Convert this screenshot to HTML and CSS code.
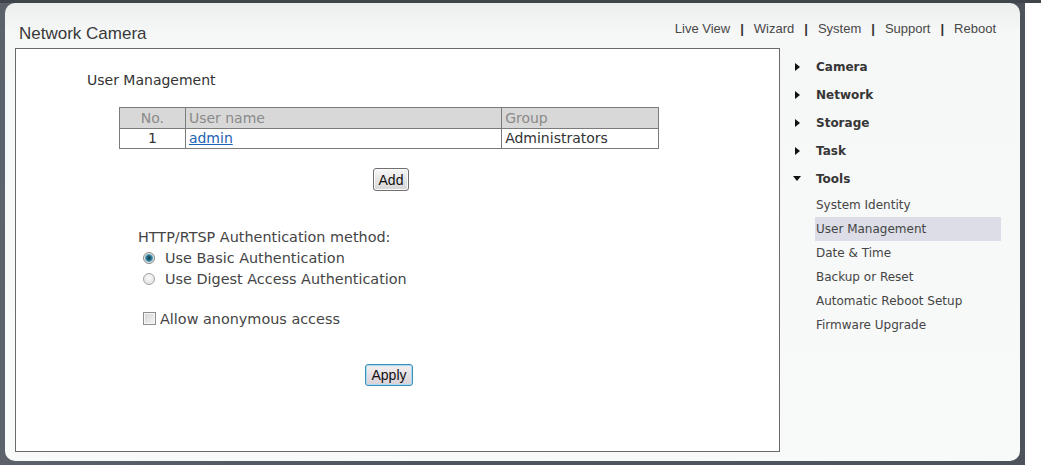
FILE: index.html
```html
<!DOCTYPE html>
<html lang="en">
<head>
<meta charset="utf-8">
<title>Network Camera - User Management</title>
<link rel="stylesheet" href="styles.css">
</head>
<body>
<div class="topline"></div>
<div class="frame">
  <div class="panel">
    <header class="head">
      <div class="brand">Network Camera</div>
      <nav class="topnav">
        <a>Live View</a><span class="sep">|</span><a>Wizard</a><span class="sep">|</span><a>System</a><span class="sep">|</span><a>Support</a><span class="sep">|</span><a>Reboot</a>
      </nav>
    </header>
    <div class="body">
      <main class="main">
        <div class="content">
          <div class="sec-title">User Management</div>
          <table class="users">
            <thead>
              <tr><th class="c-no">No.</th><th class="c-name">User name</th><th class="c-group">Group</th></tr>
            </thead>
            <tbody>
              <tr><td class="c-no">1</td><td class="c-name"><a class="link">admin</a></td><td class="c-group">Administrators</td></tr>
            </tbody>
          </table>
          <button class="btn btn-add">Add</button>
          <div class="auth">
            <div class="auth-title">HTTP/RTSP Authentication method:</div>
            <label class="opt"><input type="radio" name="auth" class="radio" checked><span>Use Basic Authentication</span></label>
            <label class="opt"><input type="radio" name="auth" class="radio"><span>Use Digest Access Authentication</span></label>
            <label class="opt chk-row"><input type="checkbox" class="check"><span>Allow anonymous access</span></label>
          </div>
          <button class="btn btn-apply">Apply</button>
        </div>
      </main>
      <aside class="side">
        <div class="menu-item"><span class="tri tri-right"></span>Camera</div>
        <div class="menu-item"><span class="tri tri-right"></span>Network</div>
        <div class="menu-item"><span class="tri tri-right"></span>Storage</div>
        <div class="menu-item"><span class="tri tri-right"></span>Task</div>
        <div class="menu-item"><span class="tri tri-down"></span>Tools</div>
        <ul class="submenu">
          <li>System Identity</li>
          <li class="active">User Management</li>
          <li>Date &amp; Time</li>
          <li>Backup or Reset</li>
          <li>Automatic Reboot Setup</li>
          <li>Firmware Upgrade</li>
        </ul>
      </aside>
    </div>
  </div>
</div>
</body>
</html>
```
FILE: styles.css
```css
* { box-sizing: border-box; }
html, body { margin: 0; padding: 0; background: #fff; }
body { width: 1041px; height: 465px; overflow: hidden; }

.topline { height: 3px; background: #3f454b; }

.frame {
  width: 1025px;
  height: 462px;
  padding: 0 5px 4px 5px;
  background: linear-gradient(to right, #5c6269, #50565d 40%, #4d535a);
}

.panel {
  height: 458px;
  border-radius: 10px;
  background: linear-gradient(#eceeee, #f6f7f7 30px, #f8f9f9);
  display: flex;
  flex-direction: column;
}

.head {
  height: 45px;
  display: flex;
  justify-content: space-between;
  align-items: flex-start;
  padding: 0 24px 0 14px;
  font-family: "Liberation Sans", Arial, sans-serif;
}
.brand {
  margin-top: 21px;
  font-size: 17px;
  line-height: 20px;
  color: #3a3a3a;
}
.topnav {
  margin-top: 18px;
  font-size: 13px;
  line-height: 15px;
  color: #484848;
  white-space: nowrap;
}
.topnav .sep { margin: 0 10px; font-weight: bold; color: #333; }

.body { flex: 1; display: flex; }

.main {
  margin-left: 10px;
  width: 765px;
  height: 404px;
  border: 1px solid #6a6a6a;
  background: #fff;
  padding: 23px 0 0 103px;
  font-family: "DejaVu Sans", Verdana, sans-serif;
  font-size: 14px;
  color: #333;
}
.content { width: 540px; }
.sec-title { margin-left: -32px; line-height: 17px; }

.users {
  margin-top: 18px;
  width: 540px;
  border-collapse: collapse;
  border: 1px solid #7b7b7b;
  font-size: 14px;
}
.users th, .users td {
  border: 1px solid #7b7b7b;
  padding: 0 3px;
  line-height: 17px;
  text-align: left;
  font-weight: normal;
}
.users th { height: 21px; background: #d8d8d8; color: #8a8a8a; }
.users td { height: 20px; color: #333; }
.users .c-no { width: 66px; text-align: center; }
.users .c-name { width: 317px; }
.users .c-group { width: 157px; }
.link { color: #1d63b3; text-decoration: underline; }

.btn {
  display: block;
  padding: 0;
  font-family: "Liberation Sans", Arial, sans-serif;
  font-size: 14px;
  color: #111;
  border: 1px solid #707070;
  border-radius: 3px;
  background: linear-gradient(#f7f7f7, #e6e6e6 50%, #d6d6d6);
  box-shadow: inset 0 0 0 1px #fbfbfb;
}
.btn-add { margin: 19px 0 0 254px; width: 36px; height: 23px; }
.btn-apply {
  margin: 35px 0 0 246px;
  width: 48px;
  height: 22px;
  border-color: #3b8fb8;
  box-shadow: inset 0 0 0 1px #a7dcf3;
  background: linear-gradient(#f4f0f2, #e6e0e4 50%, #d8d2d6);
}

.auth { margin: 38px 0 0 19px; color: #454545; font-size: 14.4px; }
.auth-title { line-height: 17px; }
.opt {
  display: flex;
  align-items: center;
  height: 21px;
  padding-left: 5px;
}
.opt:first-of-type { margin-top: 1px; }
.radio {
  appearance: none;
  -webkit-appearance: none;
  margin: 0 10px 0 0;
  width: 12px;
  height: 12px;
  border-radius: 50%;
  border: 1px solid #a3a3a3;
  background: radial-gradient(circle at 50% 40%, #fafafa, #dcdcdc);
}
.radio:checked {
  border-color: #8a8a8a;
  background: radial-gradient(circle, #153f52 0, #1f5f78 2px, #5aa0bb 3.5px, #e6e6e6 4.5px, #d2d2d2 6px);
}
.chk-row { margin-top: 19px; }
.check {
  appearance: none;
  -webkit-appearance: none;
  margin: 0 4px 0 0;
  width: 13px;
  height: 13px;
  border: 1px solid #8e8e8e;
  background: linear-gradient(135deg, #d6d6d6, #f3f3f3);
  box-shadow: inset 0 0 0 1px #f6f6f6;
}

.side {
  flex: 1;
  padding: 5px 0 0 15px;
  font-family: "DejaVu Sans", Verdana, sans-serif;
}
.menu-item {
  height: 28px;
  display: flex;
  align-items: center;
  font-size: 12px;
  font-weight: bold;
  color: #363636;
}
.tri { width: 21px; height: 8px; position: relative; flex: none; }
.tri::before { content: ""; position: absolute; width: 0; height: 0; }
.tri-right::before {
  left: 0; top: 0;
  border-left: 5px solid #111;
  border-top: 4px solid transparent;
  border-bottom: 4px solid transparent;
}
.tri-down::before {
  left: -2px; top: 1px;
  border-top: 5px solid #111;
  border-left: 4px solid transparent;
  border-right: 4px solid transparent;
}
.submenu {
  list-style: none;
  margin: 0 19px 0 20px;
  padding: 0;
  font-size: 12px;
  color: #454545;
}
.submenu li {
  height: 24px;
  line-height: 24px;
  padding-left: 1px;
}
.submenu li.active { background: #dcdde7; }
```
